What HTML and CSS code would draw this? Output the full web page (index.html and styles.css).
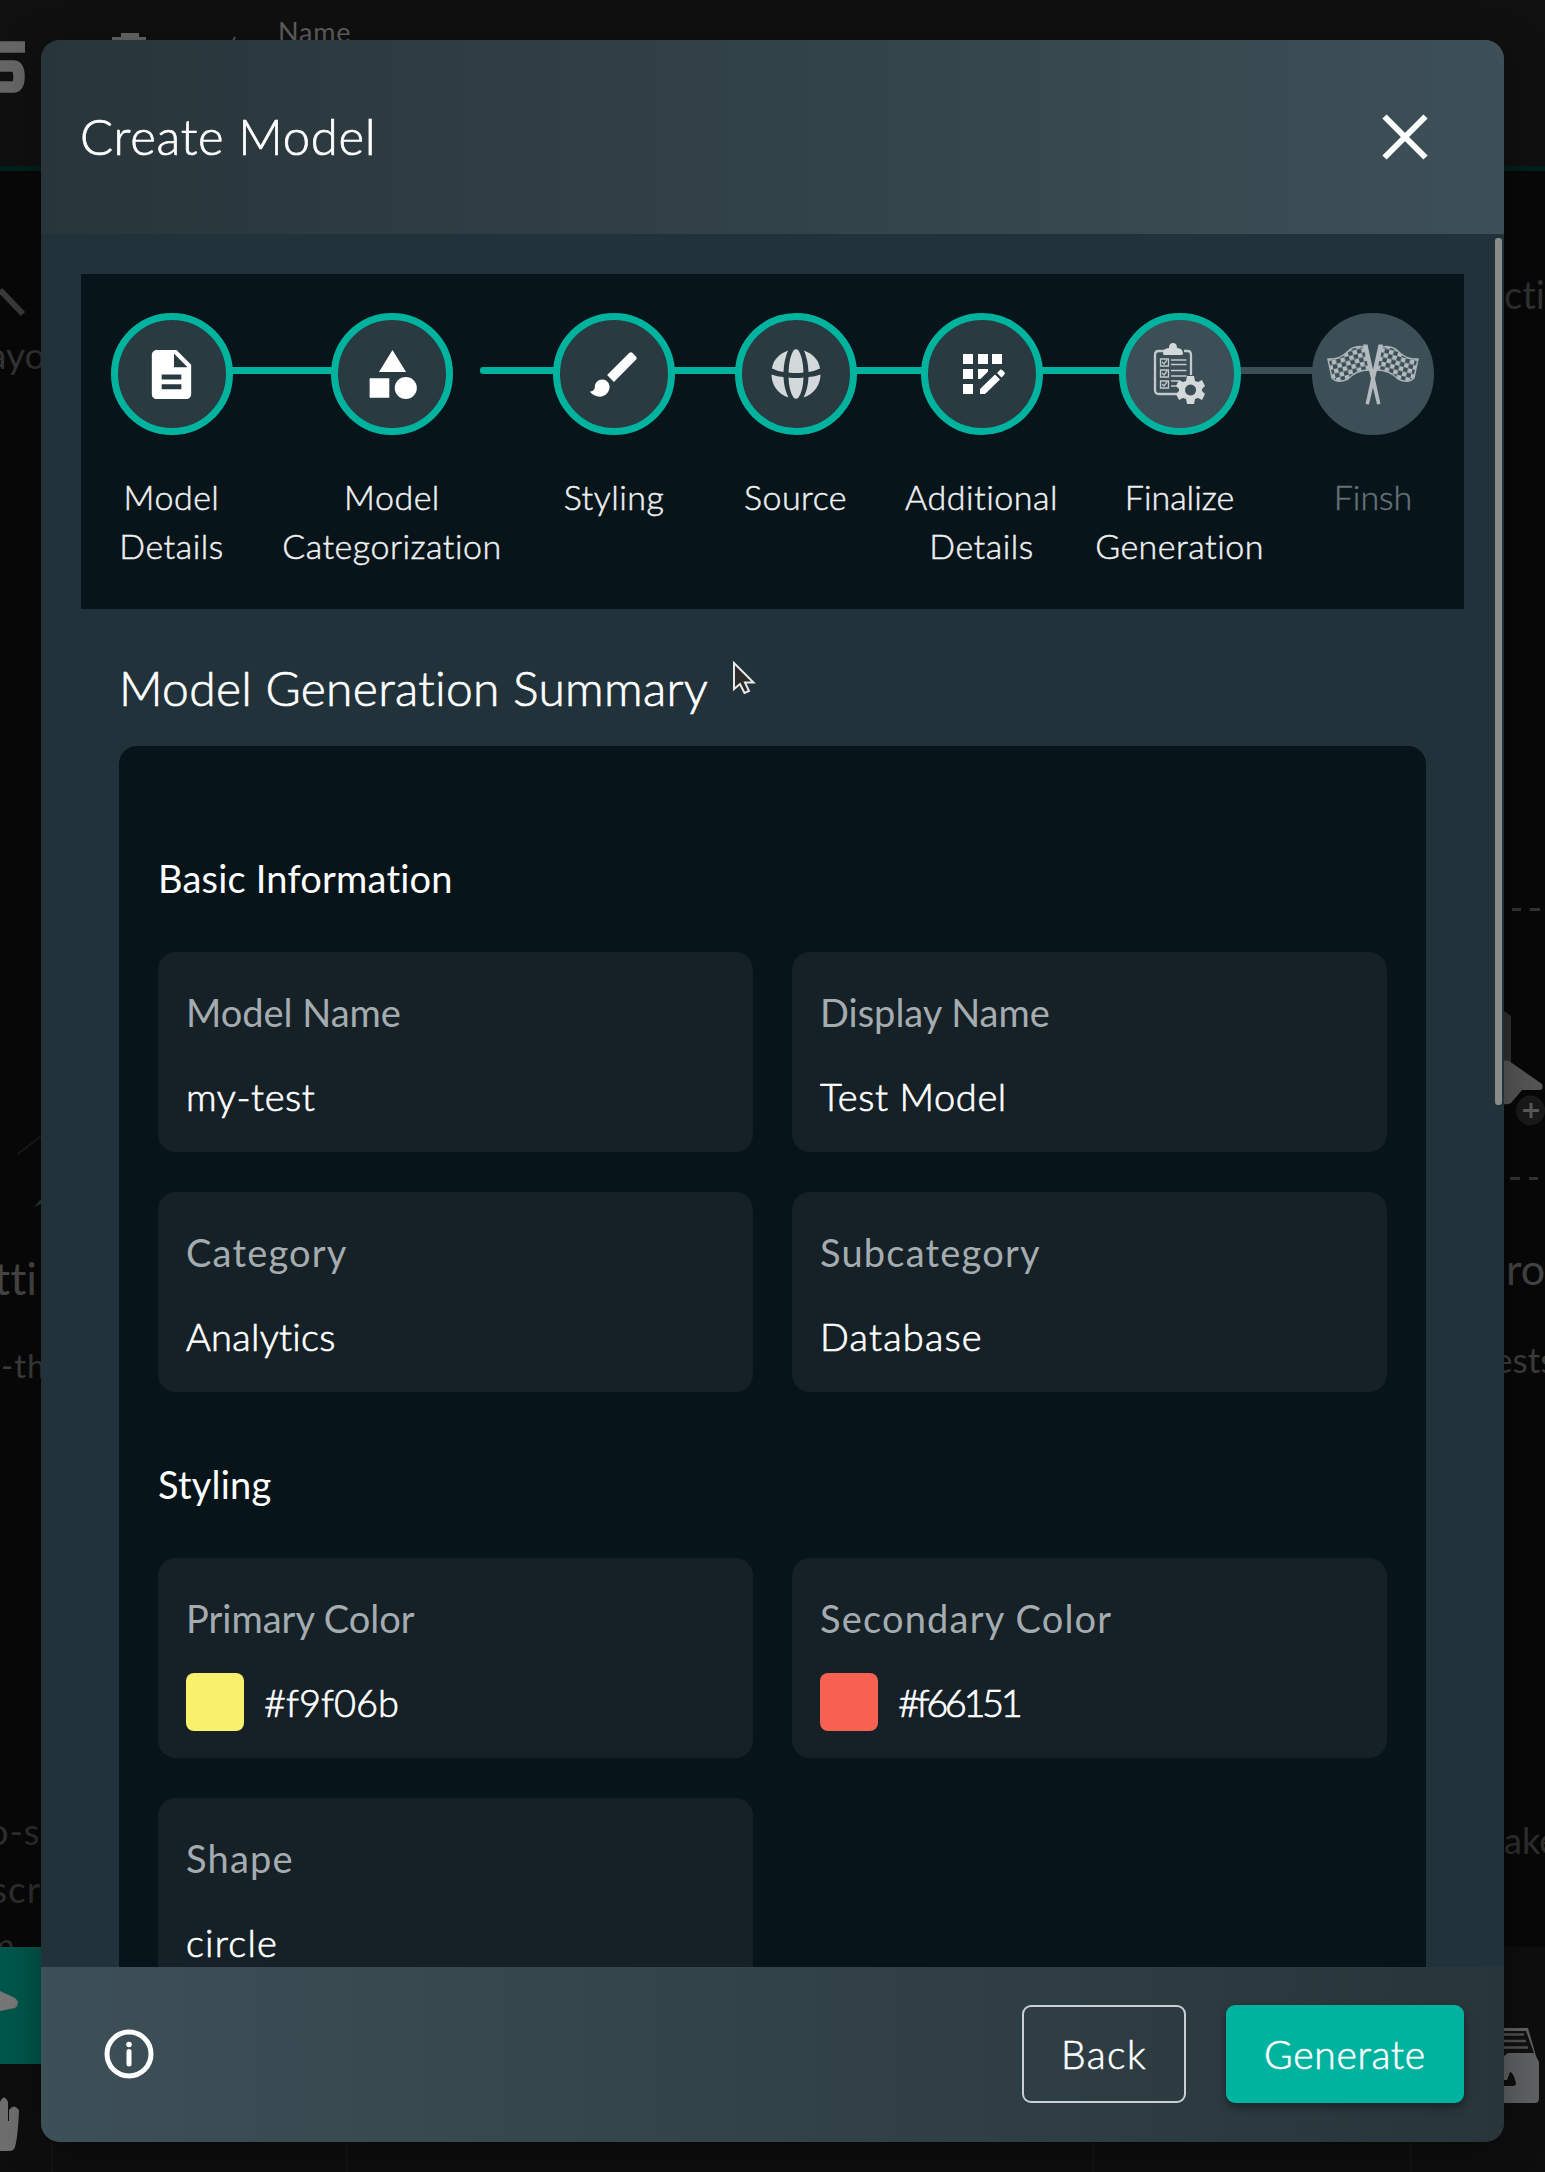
FILE: index.html
```html
<!DOCTYPE html>
<html lang="en">
<head>
<meta charset="utf-8">
<title>Create Model</title>
<link rel="stylesheet" href="styles.css">
</head>
<body>
<div class="backdrop" aria-hidden="true">
  <div class="top-bar"></div>
  <div class="tool-bar"></div>
  <svg class="canvas" viewBox="0 0 1545 2172">
    <path d="M0 47H25M0 66H13Q19 66 19 77Q19 87 13 87H0" fill="none" stroke="#666" stroke-width="11.500"/>
    <path d="M112 41V37H121V33H139V37H146V41Z" fill="#666"/>
    <path d="M233 41L235 37" stroke="#555" stroke-width="2"/>
    <path d="M0 290L23 314" stroke="#393939" stroke-width="6"/>
    <path d="M18 1154L41 1136" stroke="#181a1a" stroke-width="2"/>
    <path d="M34 1207L41 1199V1204Z" fill="#26383a"/>
    <rect x="0" y="1947" width="41" height="117" fill="#00574b"/>
    <path d="M0 1991L15 1998Q21 2003 15 2008L0 2011Z" fill="#777"/>
    <path d="M0 2102Q4 2093 8 2102V2121H9V2110Q14 2103 19 2110Q18 2136 15 2147Q14 2151 9 2151H0Z" fill="#6e6e6e"/>
    <path d="M52 2142V2172M347 2142V2172M1093 2142V2172M1411 2142V2172" stroke="#171717" stroke-width="1.5"/>
    <path d="M1512 909.500H1521M1530 909.500H1540M1510 1178.500H1520M1529 1178.500H1538" stroke="#333" stroke-width="3"/>
    <path d="M1500 1008L1511 1016V1064H1500Z" fill="#303030"/>
    <path d="M1500 1060L1509 1061L1542 1084Q1544 1090 1539 1090H1522L1511 1103Q1508 1105 1500 1104Z" fill="#565656"/>
    <ellipse cx="1530.500" cy="1110.500" rx="14.500" ry="15" fill="#1a1a1a"/>
    <path d="M1523 1110.500H1539M1531 1103V1118" stroke="#595959" stroke-width="3"/>
    <path d="M1504 2028H1528L1536 2056L1539 2062V2098Q1539 2103 1535 2103H1504Z" fill="#5f6163"/>
    <path d="M1504 2031H1526L1534 2053H1508L1504 2056Z" fill="#111"/>
    <path d="M1504 2034.500H1524M1504 2041H1526M1504 2047.500H1528" stroke="#505253" stroke-width="2.500"/>
    <path d="M1504 2080H1507L1510 2072Q1513 2072 1516 2083Q1516 2086 1513 2086H1504Z" fill="#0d0d0d"/>
  </svg>
  <span class="ghost name">Name</span>
  <span class="ghost layout">ayout</span>
  <span class="ghost setting">tti</span>
  <span class="ghost dash-th">-th</span>
  <span class="ghost os">o-s</span>
  <span class="ghost scr">scr</span>
  <span class="ghost m">m</span>
  <span class="ghost cti">cti</span>
  <span class="ghost ro">ro</span>
  <span class="ghost ests">ests</span>
  <span class="ghost ake">ake</span>
</div>

<div class="modal" role="dialog" aria-label="Create Model">
  <header class="modal-header">
    <h1 class="modal-title">Create Model</h1>
    <svg class="close" viewBox="0 0 46 46"><path d="M2.500 2.500L43.500 43.500M43.500 2.500L2.500 43.500"/></svg>
  </header>

  <main class="modal-body">
    <ol class="stepper">
      <li class="step s1">
        <span class="dot"><svg viewBox="0 0 24 24"><path d="M14 2H6c-1.100 0-2 .9-2 2v16c0 1.100.9 2 2 2h12c1.100 0 2-.9 2-2V8zm2 16H8v-2h8zm0-4H8v-2h8zm-3-5V3.500L18.500 9z"/></svg></span>
        <span class="label">Model<br>Details</span>
      </li>
      <li class="step s2">
        <span class="dot"><svg viewBox="0 0 24 24"><path d="M12 2l-5.500 9h11zM2.700 13.500h8v8h-8z"/><circle cx="17.400" cy="17.500" r="4.500"/></svg></span>
        <span class="label">Model<br>Categorization</span>
      </li>
      <li class="step s3">
        <span class="dot"><svg viewBox="0 0 24 24"><path d="M7 14c-1.660 0-3 1.340-3 3 0 1.310-1.160 2-2 2 .92 1.220 2.490 2 4 2 2.210 0 4-1.790 4-4 0-1.660-1.340-3-3-3m13.710-9.370-1.340-1.340a.996.996 0 0 0-1.410 0L9 12.250 11.750 15l8.960-8.960c.39-.39.39-1.020 0-1.410"/></svg></span>
        <span class="label">Styling</span>
      </li>
      <li class="step s4">
        <span class="dot"><svg viewBox="0 0 50 50"><g fill="#d3d8db"><path d="M17 1.500C8 5 2 11 1 19.500Q7 22.500 12.500 23Q13 11 17 1.500Z"/><path d="M33 1.500C42 5 48 11 49 19.500Q43 22.500 37.500 23Q37 11 33 1.500Z"/><path d="M17.500 23.500Q18 8 22.500 1.500Q25-1 27.500 1.500Q32 8 32.500 23.500Q25 24.500 17.500 23.500Z"/><path d="M.5 25.500Q6 27.500 12.500 28Q13 40 17.500 48.500C7 45 .5 36 .5 25.500Z"/><path d="M49.500 25.500Q44 27.500 37.500 28Q37 40 32.500 48.500C43 45 49.500 36 49.500 25.500Z"/><path d="M17.500 28.500Q25 29.500 32.500 28.500Q32 42 27.500 48.500Q25 51 22.500 48.500Q18 42 17.500 28.500Z"/></g></svg></span>
        <span class="label">Source</span>
      </li>
      <li class="step s5">
        <span class="dot"><svg viewBox="0 0 50 50"><path d="M6 5h10v10H6zM21 5h10v10H21zM35 5h10v10H35zM6 20h10v10H6zM6 35h10v10H6zM21 20h10v2.500L23.500 30H21zM23 40L38 25.500L43 30.500L28 45H23ZM40 24L43.500 20.500Q45 20 48 24Q48 25 44.500 28.500Z"/></svg></span>
        <span class="label">Additional<br>Details</span>
      </li>
      <li class="step s6 current">
        <span class="dot"><svg class="wide" viewBox="0 0 62 62"><g fill="none" stroke="#c3c9cc"><path d="M16 8H9.500Q6 8 6 12V47Q6 51 10 51H28M35 8H38.500Q42 8 42 12V32" stroke-width="2.300"/><path d="M11.500 16h8v7h-8zM11.500 27h8v7h-8zM11.500 38h8v7h-8zM13 19l2 2 3-4M13 30l2 2 3-4M13 41l2 2 3-4" stroke-width="1.300"/><path d="M22 17H37.500M22 21.500H37.500M22 27.500H37.500M22 33H37.500M22 38H30M22 43H28" stroke-width="1.500"/></g><g fill="#d3d8db"><path d="M14 11Q14 5 20 5Q20 0 24 0Q28 0 28 5Q34 5 34 11Q34 12 32 12H16Q14 12 14 11Z"/><path fill-rule="evenodd" d="M38 33h7l1 5 3 1 4-2 3 6-3 3v2l3 3-3 6-4-2-3 1-1 5h-7l-1-5-3-1-4 2-3-6 3-3v-2l-3-3 3-6 4 2 3-1zM41.500 41.500a5.500 5.500 0 1 0 .1 0z"/></g></svg></span>
        <span class="label"><span class="finalize">Finalize</span><br>Generation</span>
      </li>
      <li class="step s7 pending">
        <span class="dot"><svg class="flags" viewBox="0 0 92 62"><defs><pattern id="chk" width="9" height="9" patternUnits="userSpaceOnUse" patternTransform="rotate(-14)"><rect width="4.500" height="4.500" fill="#b4bbbf"/><rect x="4.500" y="4.500" width="4.500" height="4.500" fill="#b4bbbf"/></pattern><g id="flag"><path d="M37 4Q26 2 19 10Q11 17 1 16L5 35Q11 41 21 36Q29 27 43 27Z" fill="url(#chk)" stroke="#a9b1b5" stroke-width="1.500"/><path d="M36 1.500H40.500L53.500 61L50 61.500Z" fill="#b4bbbf"/></g></defs><use href="#flag"/><use href="#flag" transform="matrix(-1 0 0 1 92 0)"/></svg></span>
        <span class="label">Finsh</span>
      </li>
    </ol>

    <h2 class="summary-title">Model Generation Summary</h2>
    <section class="summary">
      <h3 class="group-title">Basic Information</h3>
      <dl class="grid">
        <div class="item"><dt>Model Name</dt><dd class="loose">my-test</dd></div>
        <div class="item"><dt>Display Name</dt><dd class="loose">Test Model</dd></div>
        <div class="item"><dt class="wide-text">Category</dt><dd class="semi">Analytics</dd></div>
        <div class="item"><dt class="wide-text">Subcategory</dt><dd class="wide-text">Database</dd></div>
      </dl>
      <h3 class="group-title">Styling</h3>
      <dl class="grid">
        <div class="item"><dt>Primary Color</dt><dd><i class="swatch yellow"></i>#f9f06b</dd></div>
        <div class="item"><dt class="wide-text">Secondary Color</dt><dd class="tight"><i class="swatch red"></i>#f66151</dd></div>
        <div class="item"><dt class="wide-text">Shape</dt><dd class="wide-text">circle</dd></div>
      </dl>
    </section>
    <span class="scroll-thumb"></span>
    <svg class="cursor" viewBox="0 0 24 36"><path d="M2 2V28L8 23L12.500 32L17 30L13 21.500H21.500Z"/></svg>
  </main>

  <footer class="modal-footer">
    <svg class="info" viewBox="0 0 50 50"><circle cx="25" cy="25" r="22"/><path d="M25 22.500V35"/><circle class="tip" cx="25" cy="15.500" r="2.800"/></svg>
    <button class="btn back">Back</button>
    <button class="btn generate">Generate</button>
  </footer>
</div>
</body>
</html>
```
FILE: styles.css
```css
* { box-sizing: border-box; margin: 0; padding: 0; }

body {
  position: relative;
  width: 1545px;
  height: 2172px;
  overflow: hidden;
  background: #080808;
  color: #fff;
  font-family: Lato, "Open Sans", sans-serif;
  font-weight: 300;
  font-variant-ligatures: none;
}

/* Dimmed application behind the dialog */
.backdrop { position: absolute; inset: 0; overflow: hidden; display: flex; flex-direction: column; justify-content: space-between; }
.top-bar { height: 171px; background: #101010; border-bottom: 5px solid #00201b; }
.tool-bar { height: 225px; background: #0e0e0e; }
.canvas { position: absolute; inset: 0; width: 1545px; height: 2172px; }
.ghost { position: absolute; line-height: 40px; white-space: nowrap; color: #3c3c3c; font-size: 35px; font-weight: 400; }
.name { left: 278px; top: 12px; font-size: 27px; letter-spacing: .8px; color: #5e5e5e; }
.layout { left: -12px; top: 335px; font-size: 37px; color: #333; }
.setting { left: -6px; top: 1258px; font-size: 45px; letter-spacing: 0; color: #444; }
.dash-th { left: 1px; top: 1345px; font-size: 33px; letter-spacing: 1px; }
.os { left: -12px; top: 1811px; font-size: 36px; letter-spacing: 1px; color: #2e2e2e; }
.scr { left: -9px; top: 1869px; font-size: 37px; letter-spacing: 1px; color: #2e2e2e; }
.m { left: -14px; top: 1924px; height: 23px; overflow: hidden; color: #2c2c2c; }
.cti { left: 1504px; top: 274px; font-size: 38px; color: #303232; }
.ro { left: 1506px; top: 1249px; font-size: 43px; color: #444; }
.ests { left: 1494px; top: 1339px; font-size: 35px; }
.ake { left: 1504px; top: 1820px; font-size: 36px; color: #2e2e2e; }

.modal {
  position: relative;
  display: flex;
  flex-direction: column;
  width: 1463px;
  height: 2102px;
  margin: 40px 0 0 41px;
  border-radius: 19px;
  overflow: hidden;
  background: #22323a;
  box-shadow: 0 10px 40px rgba(0, 0, 0, .35);
}

.modal-header {
  display: flex;
  align-items: center;
  justify-content: space-between;
  height: 194px;
  padding: 0 76px 2px 39px;
  background: linear-gradient(90deg, #28353b, #3d4f57);
}
.modal-title { font-size: 49px; font-weight: 300; line-height: 60px; letter-spacing: .7px; -webkit-text-stroke: .7px; }
.close { width: 46px; height: 46px; margin-top: 2px; fill: none; stroke: #fff; stroke-width: 6; }

.modal-body { position: relative; flex: none; height: 1733px; padding: 40px 40px 0; overflow: hidden; }

.stepper {
  display: grid;
  grid-template-columns: 181px 260px 184px 179px 193px 203px 184px;
  height: 335px;
  padding-top: 39px;
  background: #07141a;
  list-style: none;
}
.step { position: relative; display: flex; flex-direction: column; align-items: center; }
.dot {
  position: relative;
  z-index: 1;
  display: flex;
  align-items: center;
  justify-content: center;
  width: 122px;
  height: 122px;
  border: 7px solid #00b39f;
  border-radius: 50%;
  background: #2a3a41;
}
.dot svg { width: 50px; height: 50px; fill: #fff; }
.s1 .dot svg, .s2 .dot svg, .s3 .dot svg { width: 59px; height: 59px; }
.dot .wide { width: 62px; height: 62px; }
.dot .flags { flex: none; width: 92px; height: 62px; }
.current .dot { background: #3c4e56; }
.pending .dot { background: #3c4e56; border-color: #3c4e56; }
.label { margin-top: 37px; font-size: 34px; line-height: 49px; letter-spacing: .5px; text-align: center; color: #eef0f1; -webkit-text-stroke: .5px; }
.finalize { letter-spacing: 0; }
.pending .label { letter-spacing: 0; color: #667077; }

/* Connector running into each step from its predecessor */
.step + .step::before {
  content: "";
  position: absolute;
  right: 50%;
  top: 54px;
  height: 7px;
  background: #00b39f;
}
.s2.step::before { width: 200px; }
.s3.step::before { width: 134px; border-radius: 3px; }
.s4.step::before { width: 150px; }
.s5.step::before { width: 170px; }
.s6.step::before { width: 180px; }
.s7.step::before { width: 133px; background: #3c4e56; }

.summary-title { margin: 49px 0 0 38px; height: 88px; font-size: 48px; font-weight: 300; line-height: 60px; letter-spacing: .3px; -webkit-text-stroke: .7px; }
.summary { width: 1307px; height: 1300px; margin-left: 38px; padding: 109px 39px 0; border-radius: 18px; background: #07141a; }
.group-title { height: 97px; font-size: 38px; font-weight: 400; line-height: 46px; letter-spacing: .2px; }
.grid { display: grid; grid-template-columns: 595px 595px; grid-auto-rows: 200px; gap: 40px 39px; margin-bottom: 69px; }
.item { padding: 35px 28px; border-radius: 18px; background: #152127; }
.item dt { font-size: 38px; line-height: 51px; font-weight: 400; color: #a5acaf; }
.item dd { display: flex; align-items: center; gap: 20px; margin-top: 29px; height: 58px; font-size: 38px; line-height: 56px; padding-bottom: 0; font-weight: 300; color: #fff; -webkit-text-stroke: .7px; }
.item .loose { letter-spacing: .6px; }
.item .semi { letter-spacing: .3px; }
.item .wide-text { letter-spacing: 1.200px; }
.item .tight { letter-spacing: -3.400px; }
.swatch { width: 58px; height: 58px; border-radius: 8px; }
.yellow { background: #f9f06b; }
.red { background: #f66151; }

.scroll-thumb { position: absolute; left: 1454px; top: 4px; width: 7px; height: 867px; border-radius: 3px; background: #8b8b8b; }
.cursor { position: absolute; left: 691px; top: 427px; width: 24px; height: 36px; fill: #2b2b2b; stroke: #e8e8e8; stroke-width: 2; }

.modal-footer { display: flex; align-items: center; height: 175px; padding: 0 40px 2px 63px; background: linear-gradient(90deg, #3d4f57, #28353b); }
.info { width: 50px; height: 50px; margin-right: auto; fill: none; stroke: #fff; stroke-width: 5; stroke-linecap: round; }
.info .tip { fill: #fff; stroke: none; }
.btn { height: 98px; border-radius: 9px; font: 300 39px Lato, sans-serif; letter-spacing: .7px; color: #fff; -webkit-text-stroke: .6px; }
.back { width: 164px; margin-right: 40px; border: 2px solid #c9cfd2; background: transparent; letter-spacing: 1.500px; }
.generate { width: 238px; border: 0; background: #00b39f; box-shadow: 0 4px 8px rgba(0, 0, 0, .4); }
```
